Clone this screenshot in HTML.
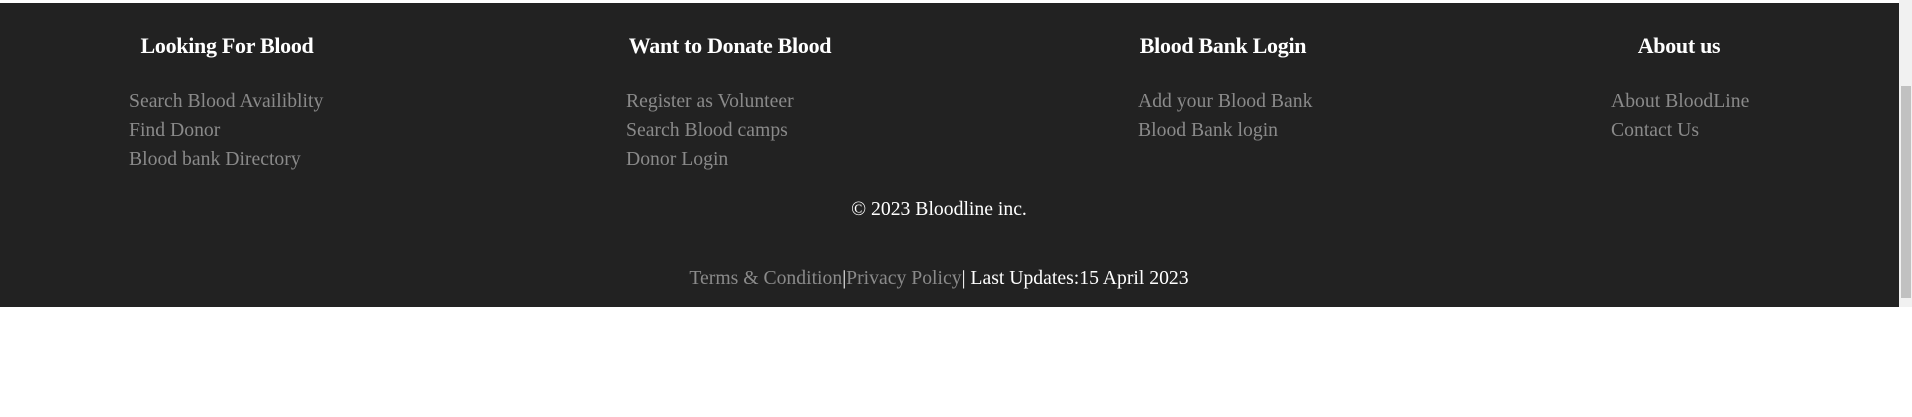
<!DOCTYPE html>
<html><head><style>
body{margin:0;width:1912px;height:417px;background:#fff;position:relative;overflow:hidden;font-family:"Liberation Serif",serif;}
.f{position:absolute;left:0;top:3px;width:1899px;height:304px;background:#222;}
.h{position:absolute;top:30px;color:#fff;font-weight:bold;font-size:22px;transform:translateX(-50%);white-space:nowrap;letter-spacing:-0.3px}
.l{position:absolute;color:#8a8a8a;font-size:19.7px;line-height:29px;white-space:nowrap}
.c{position:absolute;color:#fff;font-size:19.7px;white-space:nowrap;transform:translateX(-50%)}
.sb{position:absolute;left:1899px;top:0;width:13px;height:307px;background:#f1f1f1}
.th{position:absolute;left:1901px;top:86px;width:10px;height:212px;background:#c1c1c1}
</style></head><body>
<div class="f">
<div class="h" style="left:227px">Looking For Blood</div>
<div class="h" style="left:730px">Want to Donate Blood</div>
<div class="h" style="left:1223px">Blood Bank Login</div>
<div class="h" style="left:1679px">About us</div>
<div class="l" style="left:129px;top:84px">Search Blood Availiblity<br>Find Donor<br>Blood bank Directory</div>
<div class="l" style="left:626px;top:84px">Register as Volunteer<br>Search Blood camps<br>Donor Login</div>
<div class="l" style="left:1138px;top:84px">Add your Blood Bank<br>Blood Bank login</div>
<div class="l" style="left:1611px;top:84px">About BloodLine<br>Contact Us</div>
<div class="c" style="left:939px;top:195px">© 2023 Bloodline inc.</div>
<div class="c" style="left:939px;top:264px"><span style="color:#8a8a8a">Terms &amp; Condition</span>|<span style="color:#8a8a8a">Privacy Policy</span>| Last Updates:15 April 2023</div>
</div>
<div class="sb"></div><div class="th"></div>
</body></html>
